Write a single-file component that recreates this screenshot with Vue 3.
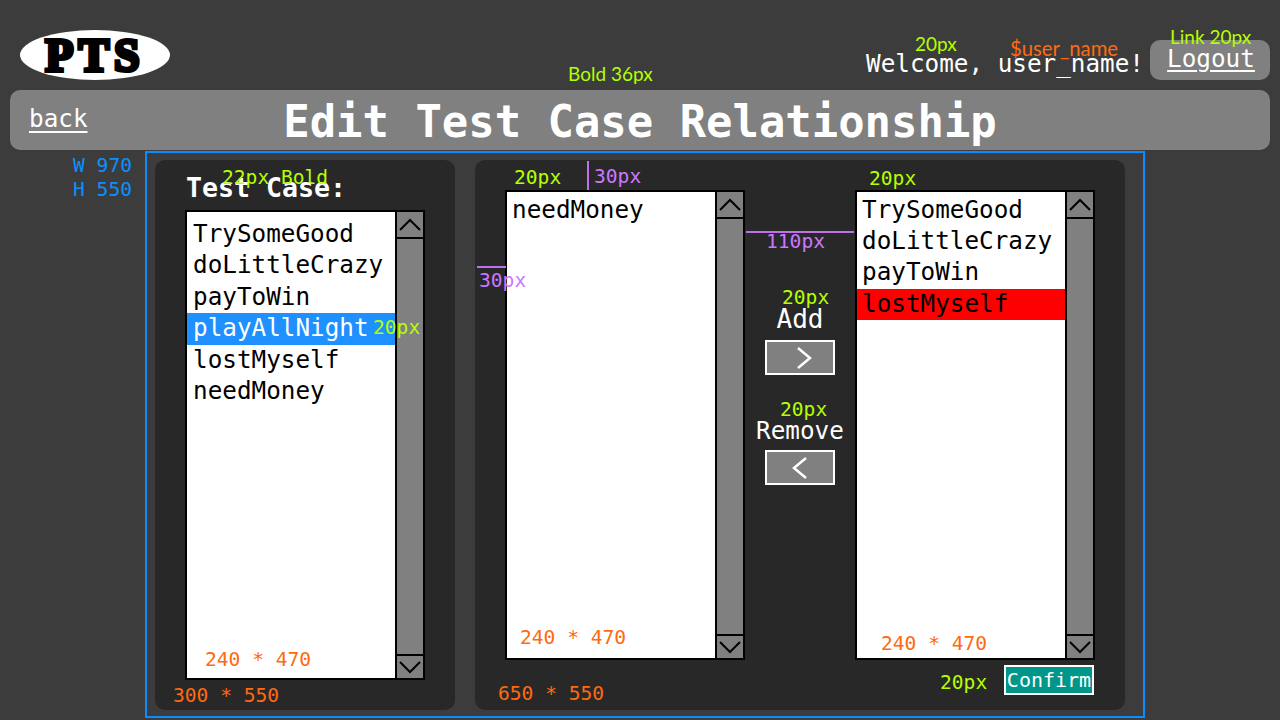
<template>
  <div class="page">
    <header class="top">
      <div class="logo"><span>PTS</span></div>
      <div class="user">
        <span class="welcome">Welcome, user_name!</span>
        <a class="logout">Logout</a>
      </div>
    </header>

    <div class="title-bar">
      <a class="back">back</a>
      <h1>Edit Test Case Relationship</h1>
    </div>

    <main class="frame">
      <section class="panel side">
        <h2>Test Case:</h2>
        <div class="listbox">
          <ul class="items all">
            <li v-for="item in allCases" :key="item" :class="{ selected: item === 'playAllNight' }">{{ item }}</li>
          </ul>
          <div class="scrollbar">
            <button class="scroll-btn up"><svg width="24" height="13" viewBox="0 0 24 13"><path d="M2 12 L12 2 L22 12" /></svg></button>
            <div class="track"></div>
            <button class="scroll-btn down"><svg width="24" height="13" viewBox="0 0 24 13"><path d="M2 1 L12 11 L22 1" /></svg></button>
          </div>
        </div>
      </section>

      <section class="panel relation">
        <div class="columns">
          <div class="listbox short">
            <ul class="items">
              <li>needMoney</li>
            </ul>
            <div class="scrollbar">
              <button class="scroll-btn up"><svg width="24" height="13" viewBox="0 0 24 13"><path d="M2 12 L12 2 L22 12" /></svg></button>
              <div class="track"></div>
              <button class="scroll-btn down"><svg width="24" height="13" viewBox="0 0 24 13"><path d="M2 1 L12 11 L22 1" /></svg></button>
            </div>
          </div>

          <div class="actions">
            <span class="action-label add">Add</span>
            <button class="move-btn">
              <svg class="nudge" width="16" height="22" viewBox="0 0 16 22"><path d="M2 1 L14 11 L2 21" /></svg>
            </button>
            <span class="action-label remove">Remove</span>
            <button class="move-btn">
              <svg width="16" height="22" viewBox="0 0 16 22"><path d="M14 1 L2 11 L14 21" /></svg>
            </button>
          </div>

          <div class="listbox short">
            <ul class="items">
              <li v-for="item in related" :key="item" :class="{ removing: item === 'lostMyself' }">{{ item }}</li>
            </ul>
            <div class="scrollbar">
              <button class="scroll-btn up"><svg width="24" height="13" viewBox="0 0 24 13"><path d="M2 12 L12 2 L22 12" /></svg></button>
              <div class="track"></div>
              <button class="scroll-btn down"><svg width="24" height="13" viewBox="0 0 24 13"><path d="M2 1 L12 11 L22 1" /></svg></button>
            </div>
          </div>
        </div>
        <div class="footer">
          <button class="confirm">Confirm</button>
        </div>
      </section>
    </main>

    <!-- spec notes drawn on top of the mockup -->
    <div class="note size-w">W 970</div>
    <div class="note size-h">H 550</div>
    <div class="note lime sans n-bold">Bold 36px</div>
    <div class="note lime sans n-welcome">20px</div>
    <div class="note orange sans n-user">$user_name</div>
    <div class="note lime sans n-link">Link 20px</div>
    <div class="note lime n-22">22px Bold</div>
    <div class="note lime n-row">20px</div>
    <div class="note lime n-list1">20px</div>
    <div class="note lime n-list2">20px</div>
    <div class="note lime n-add">20px</div>
    <div class="note lime n-remove">20px</div>
    <div class="note lime n-confirm">20px</div>
    <div class="note purple n-30a">30px</div>
    <div class="note purple n-30b">30px</div>
    <div class="note purple n-110">110px</div>
    <div class="rule v"></div>
    <div class="rule h1"></div>
    <div class="rule h2"></div>
    <div class="note orange n-s1">240 * 470</div>
    <div class="note orange n-s2">240 * 470</div>
    <div class="note orange n-s3">240 * 470</div>
    <div class="note orange n-s4">300 * 550</div>
    <div class="note orange n-s5">650 * 550</div>
  </div>
</template>

<script setup>
const allCases = ['TrySomeGood', 'doLittleCrazy', 'payToWin', 'playAllNight', 'lostMyself', 'needMoney']
const related = ['TrySomeGood', 'doLittleCrazy', 'payToWin', 'lostMyself']
</script>

<style>
html, body {
  margin: 0;
  background: #3c3c3c;
}
</style>

<style scoped>
.page {
  position: relative;
  width: 1280px;
  height: 720px;
  overflow: hidden;
  box-sizing: border-box;
  padding: 0 10px;
  background: #3c3c3c;
  color: #fff;
  font-family: "DejaVu Sans Mono", monospace;
  font-size: 24.3px;
}

.top {
  display: flex;
  justify-content: space-between;
  height: 90px;
  padding-top: 30px;
  box-sizing: border-box;
}

.logo {
  display: flex;
  align-items: center;
  justify-content: center;
  width: 150px;
  height: 50px;
  margin-left: 10px;
  border-radius: 50%;
  background: #fff;
  color: #000;
  font-family: "Liberation Serif", serif;
  font-size: 46px;
  font-weight: 700;
  letter-spacing: 5px;
}

.logo span {
  -webkit-text-stroke: 4px #000;
}

.user {
  display: flex;
  align-items: flex-start;
  gap: 6px;
  padding-top: 10px;
}

.welcome {
  line-height: 48px;
}

.logout {
  width: 120px;
  height: 40px;
  box-sizing: border-box;
  padding-left: 2px;
  line-height: 38px;
  text-align: center;
  border-radius: 10px;
  background: #808080;
  text-decoration: underline;
  text-underline-offset: 3px;
}

.title-bar {
  display: grid;
  grid-template-columns: 1fr auto 1fr;
  align-items: center;
  height: 60px;
  border-radius: 10px;
  background: #808080;
}

.back {
  padding-left: 19px;
  margin-top: -4px;
  text-decoration: underline;
  text-underline-offset: 4px;
}

h1 {
  margin: 3px 0 0;
  font-size: 43.9px;
  font-weight: 700;
}

.frame {
  display: flex;
  gap: 20px;
  width: 1000px;
  height: 567px;
  box-sizing: border-box;
  margin: 1px 0 0 135px;
  padding: 7px 8px 6px;
  border: 2px solid #0a8cff;
}

.panel {
  height: 550px;
  box-sizing: border-box;
  border-radius: 10px;
  background: #282828;
}

.side {
  width: 300px;
  padding: 10px 30px;
}

h2 {
  margin: 0 0 5px;
  padding: 2px 0 0 1px;
  height: 33px;
  line-height: 31px;
  font-size: 26.6px;
  font-weight: 700;
}

.relation {
  width: 650px;
  padding: 30px 30px 0;
}

.columns {
  display: flex;
}

.listbox {
  display: flex;
  width: 240px;
  height: 470px;
  box-sizing: border-box;
  border: 2px solid #000;
  background: #fff;
  color: #000;
}

.items {
  flex: 1;
  margin: 0;
  padding: 2px 0 0;
  list-style: none;
  line-height: 31px;
}

.items.all {
  padding-top: 7px;
  line-height: 30.4px;
}

.items li {
  padding-left: 5px;
}

.items.all li {
  padding-left: 6px;
  padding-bottom: 1px;
}

.items .selected {
  background: #1e90ff;
  color: #fff;
}

.items .removing {
  margin-top: 2px;
  line-height: 30px;
  padding-bottom: 1px;
  background: #ff0000;
}

.scrollbar {
  display: flex;
  flex-direction: column;
  width: 26px;
  border-left: 2px solid #000;
  background: #808080;
}

.scroll-btn {
  display: flex;
  align-items: center;
  justify-content: center;
  height: 27px;
  padding: 0;
  border: 0;
  background: #808080;
}

.scroll-btn.up {
  border-bottom: 2px solid #000;
}

.scroll-btn.down {
  height: 24px;
  border-top: 2px solid #000;
}

.scroll-btn path {
  fill: none;
  stroke: #000;
  stroke-width: 2;
}

.track {
  flex: 1;
}

.actions {
  display: flex;
  flex-direction: column;
  align-items: center;
  width: 110px;
  padding-top: 111px;
  box-sizing: border-box;
}

.action-label {
  height: 36px;
  line-height: 36px;
}

.action-label.add {
  font-size: 26px;
}

.action-label.remove {
  height: 34px;
  margin-top: 38px;
}

.move-btn {
  display: flex;
  align-items: center;
  justify-content: center;
  width: 70px;
  height: 35px;
  margin-top: 3px;
  padding: 0;
  border: 2px solid #fff;
  background: #808080;
}

.move-btn .nudge {
  margin-left: 7px;
}

.move-btn path {
  fill: none;
  stroke: #fff;
  stroke-width: 2.5;
}

.footer {
  display: flex;
  justify-content: flex-end;
  padding: 5px 1px 0 0;
}

.confirm {
  width: 90px;
  height: 30px;
  padding: 0;
  border: 2px solid #fff;
  background: #009688;
  color: #fff;
  font-family: "DejaVu Sans Mono", monospace;
  font-size: 20px;
}

.note {
  position: absolute;
  font-size: 19.6px;
  line-height: 24px;
  white-space: nowrap;
}

.sans {
  font-family: Lato, sans-serif;
  font-size: 19px;
}

.lime { color: #b4ff00; }
.orange { color: #ff6a10; }
.purple { color: #cc77ff; }

.size-w { left: 73px; top: 154px; color: #0a90ff; }
.size-h { left: 73px; top: 178px; color: #0a90ff; }
.n-bold { left: 568px; top: 62px; }
.n-welcome { left: 915px; top: 32px; }
.n-user { left: 1010px; top: 36px; font-size: 20.3px; }
.n-link { left: 1170px; top: 25px; }
.n-22 { left: 222px; top: 166px; }
.n-row { left: 373px; top: 316px; }
.n-list1 { left: 514px; top: 166px; }
.n-list2 { left: 869px; top: 167px; }
.n-add { left: 782px; top: 286px; }
.n-remove { left: 780px; top: 398px; }
.n-confirm { left: 940px; top: 671px; }
.n-30a { left: 594px; top: 165px; }
.n-30b { left: 479px; top: 269px; }
.n-110 { left: 766px; top: 230px; }
.n-s1 { left: 205px; top: 648px; }
.n-s2 { left: 520px; top: 626px; }
.n-s3 { left: 881px; top: 632px; }
.n-s4 { left: 173px; top: 684px; }
.n-s5 { left: 498px; top: 682px; }

.rule {
  position: absolute;
  background: #c070e8;
}

.rule.v { left: 587px; top: 161px; width: 2px; height: 29px; }
.rule.h1 { left: 746px; top: 231px; width: 108px; height: 2px; }
.rule.h2 { left: 477px; top: 266px; width: 29px; height: 2px; }
</style>
